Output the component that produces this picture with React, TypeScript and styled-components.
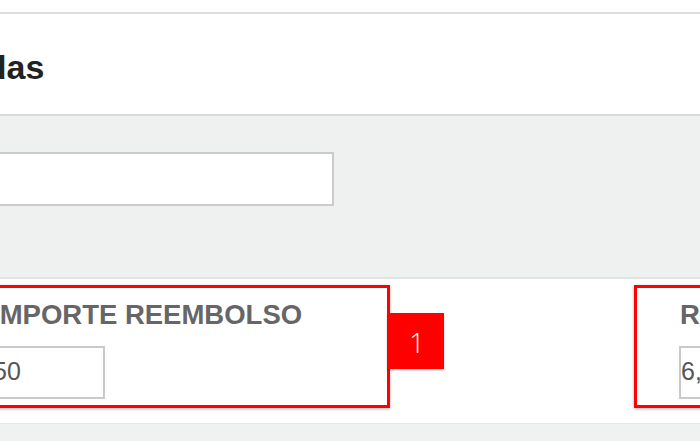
import React from "react";
import styled, { createGlobalStyle } from "styled-components";

const GlobalStyle = createGlobalStyle`
  html, body {
    margin: 0;
    padding: 0;
    background: #ffffff;
    overflow: hidden;
  }
  body {
    font-family: "Liberation Sans", Arial, sans-serif;
  }
  * {
    box-sizing: border-box;
  }
`;

// the screenshot is a crop of a wider admin page, so the page is shifted left
const Page = styled.div`
  margin-left: -300px;
  width: 1500px;
  background: #f0f1f1;
`;

const TopGap = styled.div`
  height: 14px;
  background: #ffffff;
  border-bottom: 2px solid #dcdcdc;
`;

const Header = styled.div`
  height: 102px;
  padding: 33px 0 0 8px;
  background: #ffffff;
  border-bottom: 2px solid #d9d9d9;
`;

const Title = styled.h1`
  margin: 0;
  font-size: 34px;
  line-height: 40px;
  font-weight: 700;
  color: #222222;
`;

const FilterBar = styled.div`
  height: 163px;
  padding: 36px 0 0 246px;
  background: #eff0f0;
  border-bottom: 2px solid #e3e4e4;
`;

const SearchInput = styled.input`
  display: block;
  width: 388px;
  height: 54px;
  border: 2px solid #cbcbcb;
  background: #ffffff;
  outline: none;
`;

const FormRow = styled.div`
  display: flex;
  gap: 244px;
  padding: 6px 0 15px 246px;
  background: #ffffff;
  border-bottom: 1px solid #e6e7e7;
`;

const Field = styled.div`
  position: relative;
  width: 444px;
  height: 123px;
  padding: 10.5px 0 0 43px;
  border: 3px solid #ff0000;
  box-shadow: 0 1px 3px rgba(0, 0, 0, 0.3);
`;

const Label = styled.div`
  font-size: 27.5px;
  line-height: 32px;
  font-weight: 700;
  color: #666666;
  white-space: nowrap;
`;

const ValueInput = styled.input`
  display: block;
  margin: 15.5px 0 0 -1px;
  width: 114px;
  height: 53px;
  padding: 0 0 2px 0;
  border: 2px solid #c9c9c9;
  background: #ffffff;
  font-family: "Liberation Sans", Arial, sans-serif;
  font-size: 25px;
  color: #555555;
  outline: none;
`;

const Badge = styled.div`
  position: absolute;
  top: 25px;
  right: -57px;
  width: 57px;
  height: 56px;
  display: flex;
  align-items: center;
  justify-content: center;
  padding: 3px 0 0 3px;
  background: #ff0000;
  color: #ffffff;
  font-family: "Open Sans", sans-serif;
  font-weight: 300;
  font-size: 27px;
  box-shadow: 0 1px 2px rgba(0, 0, 0, 0.25);
`;

const Bottom = styled.div`
  height: 18px;
  background: #f0f1f1;
`;

const fields = [
  { label: "IMPORTE REEMBOLSO", value: "50", badge: "1" },
  { label: "RECARGO REEMBOLSO", value: "6,50" },
];

export default function App() {
  return (
    <>
      <GlobalStyle />
      <Page>
        <TopGap />
        <Header>
          <Title>Opciones avanzadas</Title>
        </Header>
        <FilterBar>
          <SearchInput type="text" />
        </FilterBar>
        <FormRow>
          {fields.map((f) => (
            <Field key={f.label}>
              <Label>{f.label}</Label>
              <ValueInput type="text" defaultValue={f.value} />
              {f.badge && <Badge>{f.badge}</Badge>}
            </Field>
          ))}
        </FormRow>
        <Bottom />
      </Page>
    </>
  );
}
